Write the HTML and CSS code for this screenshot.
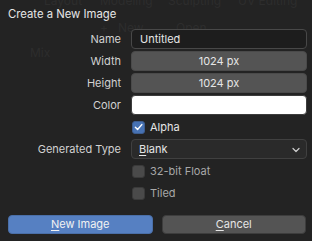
FILE: index.html
```html
<!DOCTYPE html>
<html>
<head>
<meta charset="utf-8">
<link rel="stylesheet" href="styles.css">
</head>
<body>
<div class="ghost" aria-hidden="true">
  <span class="g g-layout">Layout</span>
  <span class="g g-model">Modeling</span>
  <span class="g g-sculpt">Sculpting</span>
  <span class="g g-uv">UV Editing</span>
  <span class="g g-new">New</span>
  <span class="g g-plus">+</span>
  <span class="g g-open">Open</span>
  <span class="g g-mix">Mix</span>
</div>
<div class="dialog">
  <div class="title">Create a New Image</div>
  <div class="form">
    <div class="label">Name</div>
    <div class="field text">Untitled</div>

    <div class="label">Width</div>
    <div class="field num">1024 px</div>

    <div class="label">Height</div>
    <div class="field num">1024 px</div>

    <div class="label">Color</div>
    <div class="field color"></div>

    <div class="label"></div>
    <div class="check-row"><span class="box on"><svg viewBox="0 0 12 12" width="12" height="12"><path d="M2.6 6.3 L5 8.7 L9.6 3.4" fill="none" stroke="#fff" stroke-width="1.6" stroke-linecap="round" stroke-linejoin="round"/></svg></span><span class="ctext">Alpha</span></div>

    <div class="label">Generated Type</div>
    <div class="field menu"><span><u>B</u>lank</span><svg class="chev" viewBox="0 0 8 6" width="8" height="6"><path d="M1 1.5 L4 4.5 L7 1.5" fill="none" stroke="#cfcfcf" stroke-width="1.2" stroke-linecap="round" stroke-linejoin="round"/></svg></div>

    <div class="label"></div>
    <div class="check-row dim"><span class="box"></span><span class="ctext">32-bit Float</span></div>

    <div class="label"></div>
    <div class="check-row dim"><span class="box"></span><span class="ctext">Tiled</span></div>
  </div>
  <div class="buttons">
    <div class="btn primary"><u>N</u>ew Image</div>
    <div class="btn"><u>C</u>ancel</div>
  </div>
</div>
</body>
</html>
```
FILE: styles.css
```css
html, body {
  margin: 0;
  padding: 0;
}
body {
  width: 312px;
  height: 241px;
  background: #232323;
  font-family: Inter, "Noto Sans", sans-serif;
  font-size: 11px;
  color: #e0e0e0;
  position: relative;
  overflow: hidden;
}
.ghost {
  position: absolute;
  inset: 0;
  color: #2d2d2d;
  font-size: 12px;
}
.g { position: absolute; white-space: nowrap; line-height: 14px; }
.g-layout { left: 44px; top: -6px; }
.g-model { left: 100px; top: -6px; }
.g-sculpt { left: 168px; top: -6px; }
.g-uv { left: 238px; top: -6px; }
.g-plus { left: 100px; top: 21px; }
.g-new { left: 118px; top: 21px; }
.g-open { left: 176px; top: 21px; }
.g-mix { left: 30px; top: 46px; }

.dialog {
  position: relative;
  padding: 8px 6px 7px 8px;
  display: flex;
  flex-direction: column;
}
.title {
  height: 13px;
  line-height: 13px;
  font-size: 11.3px;
  color: #e6e6e6;
}
.form {
  margin-top: 8px;
  display: grid;
  grid-template-columns: 113px 176px;
  column-gap: 10px;
  row-gap: 2px;
  grid-auto-rows: 20px;
}
.label {
  text-align: right;
  line-height: 20px;
  color: #d2d2d2;
}
.field {
  box-sizing: border-box;
  height: 20px;
  border-radius: 4px;
  line-height: 18px;
  border: 1px solid #3d3d3d;
}
.text {
  background: #1d1d1d;
  border-color: #484848;
  padding-left: 8px;
  color: #e6e6e6;
}
.num {
  background: #545454;
  border-color: #4a4a4a;
  text-align: center;
  color: #e6e6e6;
}
.color {
  background: #ffffff;
  border-color: #3d3d3d;
}
.menu {
  background: #2a2a2a;
  border-color: #404040;
  padding: 0 6px 0 7px;
  display: flex;
  align-items: center;
  justify-content: space-between;
  color: #e6e6e6;
}
.chev { margin-top: 1px; }
.check-row {
  display: flex;
  align-items: center;
  gap: 5px;
  padding-left: 1px;
}
.box {
  box-sizing: border-box;
  width: 13px;
  height: 13px;
  border-radius: 3px;
  background: #545454;
  border: 1px solid #3d3d3d;
  display: flex;
  align-items: center;
  justify-content: center;
}
.box.on {
  background: #4772b3;
  border-color: #3d5d8f;
}
.ctext { color: #e6e6e6; }
.dim .box { background: #4a4a4a; border-color: #3a3a3a; }
.dim .ctext { color: #a8a8a8; }
.buttons {
  margin-top: 12px;
  display: flex;
  gap: 9px;
}
.btn {
  flex: 1;
  box-sizing: border-box;
  height: 19px;
  border-radius: 4px;
  background: #545454;
  border: 1px solid #3d3d3d;
  text-align: center;
  line-height: 17px;
  color: #e6e6e6;
}
.btn.primary {
  background: #5680c2;
  border-color: #4a6fa8;
  color: #f2f2f2;
}
u { text-underline-offset: 2px; }
```
